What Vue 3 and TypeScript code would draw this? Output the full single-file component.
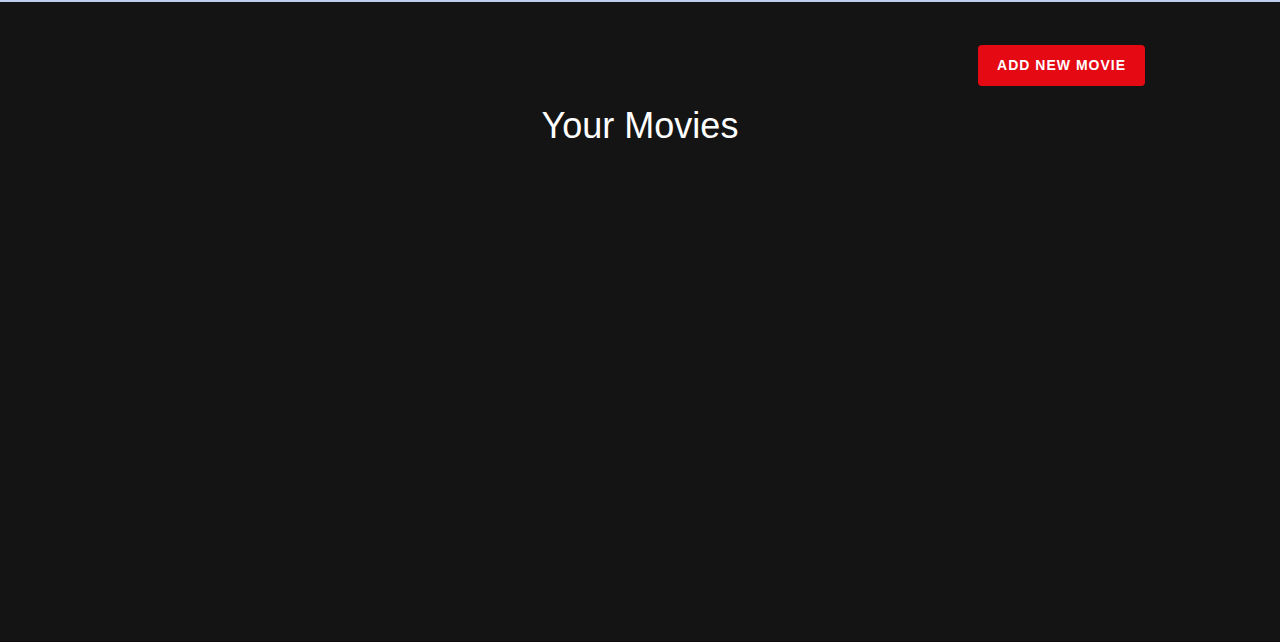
<script setup lang="ts">
import { ref } from 'vue'

interface Movie {
  id: number
  title: string
}

const heading = 'Your Movies'
const movies = ref<Movie[]>([])
</script>

<template>
  <div class="page">
    <header class="toolbar">
      <button type="button" class="add-button">Add new movie</button>
    </header>
    <main class="content">
      <h1 class="heading">{{ heading }}</h1>
      <ul v-if="movies.length" class="movies">
        <li v-for="movie in movies" :key="movie.id">{{ movie.title }}</li>
      </ul>
    </main>
  </div>
</template>

<style>
body {
  margin: 0;
  background: #141414;
}
</style>

<style scoped>
.page {
  box-sizing: border-box;
  min-height: 100vh;
  border-top: 2px solid #c0cfee;
  border-bottom: 1px solid #0c0a0b;
  background: #141414;
  color: #fff;
  font-family: "Liberation Sans", Arial, Helvetica, sans-serif;
}

.toolbar {
  display: flex;
  justify-content: flex-end;
  max-width: 1010px;
  margin: 0 auto;
  padding-top: 43px;
}

.add-button {
  padding: 0 19px;
  border: 0;
  border-radius: 4px;
  background: #e50914;
  color: #fff;
  font: 700 14px/41px "Liberation Sans", Arial, Helvetica, sans-serif;
  letter-spacing: 1px;
  text-transform: uppercase;
  cursor: pointer;
}

.heading {
  margin: 18px 0 0;
  font-size: 36px;
  font-weight: 400;
  line-height: 44px;
  text-align: center;
}

.movies {
  max-width: 1010px;
  margin: 24px auto;
  padding: 0;
  list-style: none;
}
</style>
